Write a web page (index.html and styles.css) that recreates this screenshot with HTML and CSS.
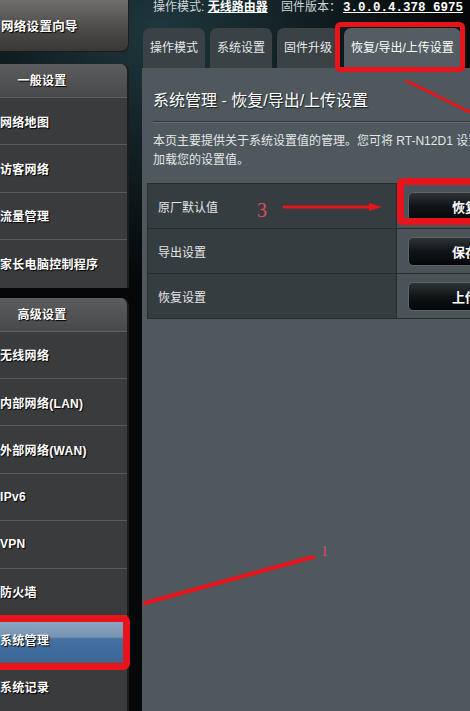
FILE: index.html
```html
<!DOCTYPE html>
<html lang="zh-CN">
<head>
    <meta charset="UTF-8">
    <title>系统管理 - 恢复/导出/上传设置</title>
    <link rel="stylesheet" href="styles.css">
</head>
<body>
    <div class="page">
        <aside class="sidebar">
            <div class="wizard">网络设置向导</div>

            <div class="nav-group">
                <div class="nav-head">一般设置</div>
                <div class="nav-item">网络地图</div>
                <div class="nav-item">访客网络</div>
                <div class="nav-item">流量管理</div>
                <div class="nav-item">家长电脑控制程序</div>
            </div>

            <div class="nav-group">
                <div class="nav-head">高级设置</div>
                <div class="nav-item">无线网络</div>
                <div class="nav-item">内部网络(LAN)</div>
                <div class="nav-item">外部网络(WAN)</div>
                <div class="nav-item">IPv6</div>
                <div class="nav-item">VPN</div>
                <div class="nav-item">防火墙</div>
                <div class="nav-item active">系统管理</div>
                <div class="nav-item">系统记录</div>
            </div>
        </aside>

        <main class="main">
            <div class="topbar">
                <span>操作模式: </span><a class="topbar-value">无线路由器</a>
                <span class="topbar-label">固件版本：</span><a class="topbar-value fw">3.0.0.4.378_6975</a>
            </div>

            <div class="tabs">
                <div class="tab">操作模式</div>
                <div class="tab">系统设置</div>
                <div class="tab">固件升级</div>
                <div class="tab active">恢复/导出/上传设置</div>
            </div>

            <section class="panel">
                <h1 class="panel-title">系统管理 - 恢复/导出/上传设置</h1>
                <p class="desc">本页主要提供关于系统设置值的管理。您可将 RT-N12D1 设置值储存为文件，或从文件中<br>加载您的设置值。</p>

                <table class="settings">
                    <tr>
                        <th>原厂默认值</th>
                        <td><button class="btn">恢复</button></td>
                    </tr>
                    <tr>
                        <th>导出设置</th>
                        <td><button class="btn">保存</button></td>
                    </tr>
                    <tr>
                        <th>恢复设置</th>
                        <td><button class="btn">上传</button></td>
                    </tr>
                </table>
            </section>
        </main>
    </div>

    <!-- red markup drawn over the screenshot -->
    <svg class="marks" width="470" height="711" viewBox="0 0 470 711">
        <g fill="none" stroke="#e8141b">
            <rect x="337.5" y="24.5" width="125" height="45" rx="3" stroke-width="5"/>
            <rect x="400.5" y="181.5" width="100" height="40" rx="2" stroke-width="7"/>
            <rect x="-10" y="618.5" width="136.5" height="48" rx="3" stroke-width="7"/>
            <line x1="283" y1="207" x2="372" y2="207" stroke-width="3"/>
            <line x1="145" y1="603" x2="313" y2="557" stroke-width="4" stroke-linecap="round"/>
            <line x1="407" y1="81" x2="480" y2="117" stroke-width="3" stroke-linecap="round"/>
        </g>
        <polygon points="369,203 382,207 369,211" fill="#e8141b"/>
        <text x="257" y="217" class="mark-num">3</text>
        <text x="321" y="556" class="mark-num small">1</text>
    </svg>
</body>
</html>
```

FILE: styles.css
```css
* {
    box-sizing: border-box;
    margin: 0;
    padding: 0;
}

body {
    position: relative;
    width: 470px;
    height: 711px;
    overflow: hidden;
    font-family: "Liberation Sans", "Noto Sans CJK SC", sans-serif;
    color: #e6e6e6;
    background: radial-gradient(ellipse 300px 260px at 160px 30px, #1e373d, #0c1416 70%, #050708);
}

.page {
    display: flex;
    align-items: flex-start;
}

/* left menu */
.sidebar {
    width: 172px;
    margin-left: -43px;
    margin-right: 13px;
    flex-shrink: 0;
    font-size: 12px;
    font-weight: bold;
    letter-spacing: 0.3px;
    color: #fff;
    text-shadow: 1px 1px 1px #000;
}

.wizard {
    height: 52px;
    padding-left: 43px;
    display: flex;
    align-items: center;
    font-size: 12.5px;
    background: linear-gradient(#716f6e, #4d4b4a 55%, #3a3837);
    border: 1px solid #1b1b1b;
    border-top: none;
    border-radius: 0 0 8px 0;
}

.nav-group {
    margin-top: 12px;
    background: #3a3b3d;
    border-right: 2px solid #1c1d1e;
    border-radius: 0 8px 0 0;
    overflow: hidden;
}

.nav-group + .nav-group {
    margin-top: 10px;
}

.nav-head {
    height: 34px;
    line-height: 34px;
    text-align: center;
    background: linear-gradient(#5b5c5e, #48494b);
    border-bottom: 1px solid #5e5f61;
}

.nav-item {
    height: 47.4px;
    padding-left: 43px;
    display: flex;
    align-items: center;
    border-bottom: 1px solid #5a5b5d;
}

.nav-item:last-child {
    border-bottom: none;
}

.nav-item.active {
    background: linear-gradient(#93abc3, #7694b3 45%, #44719f 50%, #3b6796);
}

/* main column */
.main {
    width: 620px;
    flex-shrink: 0;
}

.topbar {
    height: 28px;
    padding-left: 11px;
    font-size: 12px;
    line-height: 14px;
    color: #cfd5d8;
    white-space: nowrap;
}

.topbar-value {
    color: #fff;
    font-weight: bold;
    text-decoration: underline;
}

.topbar-label {
    margin-left: 10px;
}

.fw {
    margin-left: 2px;
    font-family: "Liberation Mono", monospace;
    font-size: 12.5px;
}

.tabs {
    display: flex;
    gap: 5px;
    height: 40px;
    padding-left: 1px;
}

.tab {
    padding: 0 7px;
    line-height: 40px;
    font-size: 12px;
    color: #e6e8e9;
    background: #3b4245;
    border-radius: 7px 7px 0 0;
}

.tab.active {
    color: #fff;
    background: #535d62;
}

.panel {
    min-height: 643px;
    padding: 22px 11px 0;
    background: #4e585d;
}

.panel-title {
    font-size: 16px;
    line-height: 22px;
    font-weight: normal;
    color: #fff;
    text-shadow: 1px 1px 1px #1c2124;
    padding-bottom: 9px;
    border-bottom: 1px solid #2e363a;
    box-shadow: 0 1px 0 #667177;
}

.desc {
    margin: 10px 0 13px;
    font-size: 12px;
    line-height: 19px;
    color: #e4e6e7;
    white-space: nowrap;
}

.settings {
    width: 560px;
    margin-left: -6px;
    border-collapse: collapse;
}

.settings th {
    width: 249px;
    height: 45px;
    padding-left: 10px;
    text-align: left;
    font-size: 12px;
    font-weight: normal;
    color: #e2e4e5;
    background: #363d41;
    border: 1px solid #262c2f;
}

.settings td {
    padding-left: 11px;
    background: #4a5358;
    border: 1px solid #262c2f;
}

.btn {
    width: 114px;
    height: 29px;
    font-family: inherit;
    font-size: 13px;
    font-weight: bold;
    color: #fff;
    background: linear-gradient(#2d3438, #101416 50%, #050607);
    border: 1px solid #5c656a;
    border-radius: 5px;
}

/* annotation layer */
.marks {
    position: absolute;
    top: 0;
    left: 0;
    pointer-events: none;
}

.mark-num {
    font-family: "Liberation Serif", serif;
    font-size: 20px;
    fill: #e04a66;
}

.mark-num.small {
    font-size: 14px;
}
```
